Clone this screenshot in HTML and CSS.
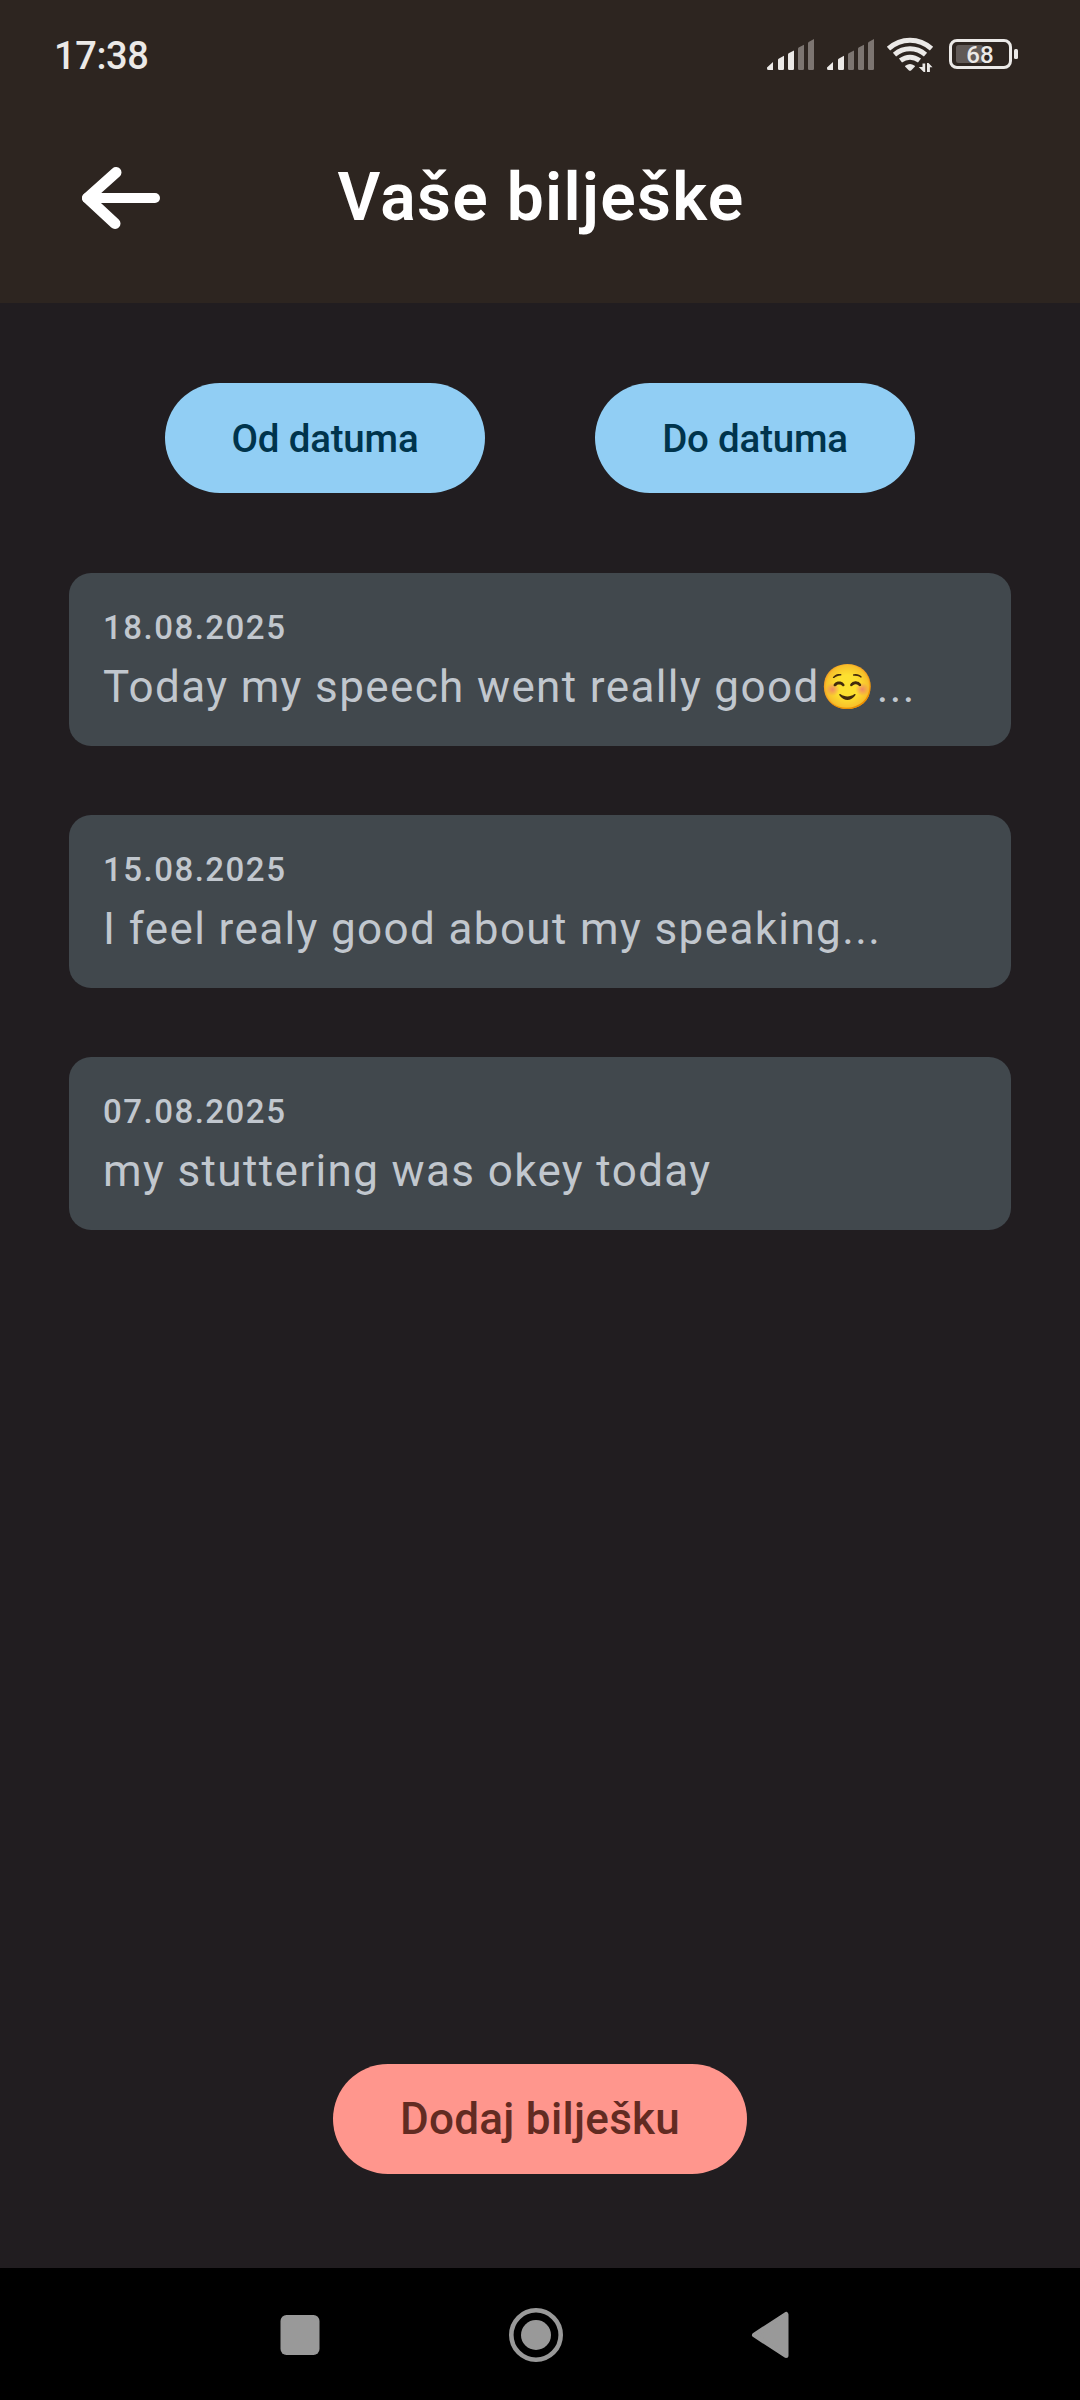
FILE: index.html
```html
<!DOCTYPE html>
<html lang="hr">
<head>
<meta charset="utf-8">
<title>Vaše bilješke</title>
<link rel="stylesheet" href="styles.css">
</head>
<body>
<div class="screen">
  <header class="header">
    <div class="status-bar">
      <span class="time">17:38</span>
      <svg class="status-icons" width="260" height="40" viewBox="0 0 260 40">
        <g fill="#ebe9e7">
          <path d="M2 31.500l6-5.500v8h-4.500q-1.500 0-1.500-1.500zM13 24q0-.8.600-1.300L19 19.700v13q0 1.300-1.300 1.300h-3.400q-1.300 0-1.300-1.300zM23 18.700q0-1 .6-1.500L29 14.500v18.200q0 1.300-1.300 1.300h-3.400q-1.300 0-1.300-1.300z"/>
          <path d="M62 31.500l6-5.500v8h-4.500q-1.500 0-1.500-1.500zM73 24q0-.8.600-1.300L79 19.700v13q0 1.300-1.300 1.300h-3.400q-1.300 0-1.300-1.300z"/>
        </g>
        <g fill="#7c7571">
          <path d="M33 13q0-1 .6-1.500L39 8.800v23.900q0 1.300-1.300 1.300h-3.400q-1.300 0-1.300-1.300zM43 7.500q0-1 .6-1.500L49 3v29.700q0 1.300-1.300 1.300h-3.400q-1.300 0-1.300-1.300z"/>
          <path d="M83 18.700q0-1 .6-1.500L89 14.500v18.200q0 1.300-1.300 1.300h-3.400q-1.300 0-1.300-1.300zM93 13q0-1 .6-1.500L99 8.800v23.900q0 1.300-1.300 1.300h-3.400q-1.300 0-1.300-1.300zM103 7.500q0-1 .6-1.500L109 3v29.700q0 1.300-1.300 1.300h-3.400q-1.300 0-1.300-1.300z"/>
        </g>
        <g fill="none" stroke="#ebe9e7" stroke-width="5">
          <path d="M123.500 12.600Q133 4.200 145 4.200T166.500 12.600"/>
          <path d="M129.500 18.600Q136.500 12.800 145 12.800T160.500 18.600"/>
          <path d="M135.500 24.600Q140 21.200 145 21.200T154.500 24.600"/>
        </g>
        <path fill="#ebe9e7" d="M140 30.500q0-1.500 5-2.500q5 1 5 2.500l-3.700 3.800q-1.300 1-2.600 0z"/>
        <path fill="#ebe9e7" d="M157.500 27.500h2.700V36h-1.500l-5-5h3.800zM162 27h1.500l4 4.300h-2.600V36H162z"/>
        <rect x="191" y="9" width="27" height="18" rx="2.500" fill="#615a57"/>
        <rect x="185.500" y="4.500" width="60" height="27" rx="6.500" fill="none" stroke="#ebe9e7" stroke-width="3"/>
        <rect x="249" y="13" width="4" height="10" rx="1.500" fill="#ebe9e7"/>
        <text class="battery-level" x="215" y="27">68</text>
      </svg>
    </div>
    <div class="title-bar">
      <svg class="back" width="80" height="64" viewBox="0 0 80 64" fill="none" stroke="#fff" stroke-width="10" stroke-linecap="round" stroke-linejoin="round">
        <path d="M5 32H73" />
        <path d="M34 6.500L5.500 32L33 57.500" stroke-width="11"/>
      </svg>
      <h1 class="title">Vaše bilješke</h1>
    </div>
  </header>
  <main class="content">
    <div class="filters">
      <button class="button filter">Od datuma</button>
      <button class="button filter">Do datuma</button>
    </div>
    <div class="notes">
      <article class="note"><time class="date">18.08.2025</time><p class="text">Today my speech went really good<span class="emoji">☺️</span>...</p></article>
      <article class="note"><time class="date">15.08.2025</time><p class="text">I feel realy good about my speaking...</p></article>
      <article class="note"><time class="date">07.08.2025</time><p class="text">my stuttering was okey today</p></article>
    </div>
    <button class="button add">Dodaj bilješku</button>
  </main>
  <nav class="nav">
    <svg width="40" height="54" viewBox="0 0 40 54" fill="#999"><rect x=".5" y="7" width="39" height="40" rx="6"/></svg>
    <svg width="54" height="54" viewBox="0 0 54 54"><circle cx="27" cy="27" r="24.700" fill="none" stroke="#999" stroke-width="4.600"/><circle cx="27" cy="27" r="15" fill="#999"/></svg>
    <svg width="38" height="54" viewBox="0 0 38 54"><path d="M35 6.500V47.500L3.500 27z" fill="#999" stroke="#999" stroke-width="5" stroke-linejoin="round"/></svg>
  </nav>
</div>
</body>
</html>
```
FILE: styles.css
```css
* { box-sizing: border-box; }
body { margin: 0; font-family: Roboto, sans-serif; background: #211d20; }
.screen { width: 1080px; height: 2400px; display: flex; flex-direction: column; }
.header { height: 303px; background: #2d2520; }
.status-bar { height: 110px; padding: 0 55px 0 54px; display: flex; justify-content: space-between; }
.time { font-size: 38px; font-weight: 500; line-height: 50px; padding-top: 31px; letter-spacing: -0.4px; color: #ebe9e7; }
.status-icons { margin-top: 36px; }
.battery-level { font: 500 24px Roboto, sans-serif; fill: #ebe9e7; text-anchor: middle; }
.title-bar { height: 176px; padding-left: 82px; display: grid; grid-template-columns: 80px 758px; align-items: center; }
.title { margin: 0; font-size: 66px; font-weight: 600; line-height: 88px; letter-spacing: 1.3px; text-align: center; color: #fff; }
.content { flex: 1; padding: 80px 69px 94px; display: flex; flex-direction: column; align-items: center; }
.filters { display: flex; gap: 110px; }
.button { height: 110px; border: 0; border-radius: 55px; padding: 0; font-family: inherit; font-weight: 500; }
.filter { width: 320px; background: #91cef4; color: #00344c; font-size: 38.5px; letter-spacing: -0.2px; }
.notes { align-self: stretch; margin-top: 80px; display: flex; flex-direction: column; gap: 69px; }
.note { height: 173px; padding: 33px 34px 0; border-radius: 22px; background: #41484d; color: #c1c7ce; }
.date { display: block; font-size: 33px; font-weight: 500; line-height: 44px; letter-spacing: 1.5px; }
.text { margin: 4px 0 0; font-size: 44px; line-height: 66px; letter-spacing: 1.375px; white-space: nowrap; }
.emoji { margin-left: 1px; font-family: "Noto Color Emoji", sans-serif; }
.add { width: 414px; margin-top: auto; background: #ff968d; color: #622b22; font-size: 44px; letter-spacing: 0.3px; }
.nav { height: 132px; padding: 2px 291px 0 280px; background: #000; display: flex; align-items: center; justify-content: space-between; }
```
